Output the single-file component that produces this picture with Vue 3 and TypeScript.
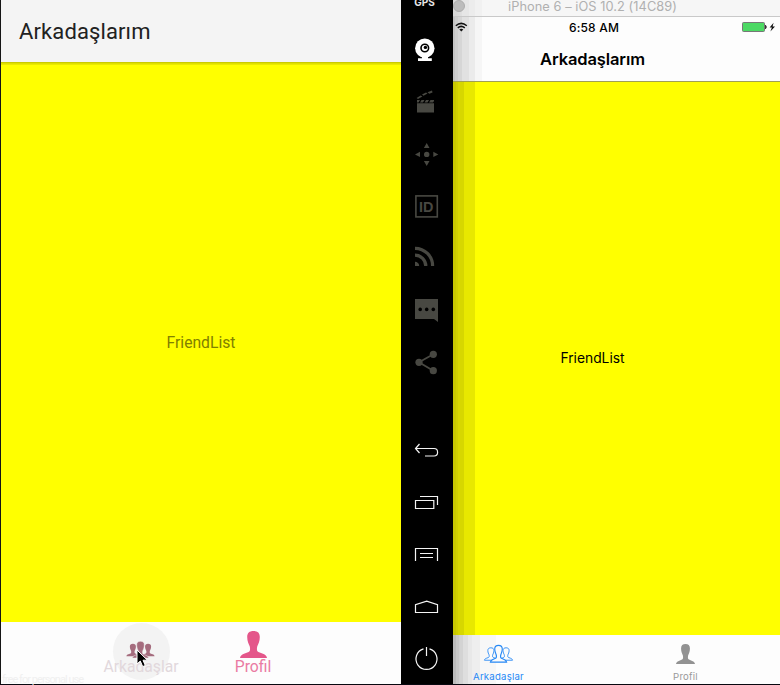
<script setup lang="ts">
const person =
  'M13.5 0C17.6 0 19.8 2 19.8 6C19.8 10.5 18.2 13 17.3 15.2C16.6 18 16.8 20.2 18.4 21L23 22.8C25.5 23.8 26.6 25 27 27H0C.4 25 1.5 23.8 4 22.8L8.6 21C10.2 20.2 10.4 18 9.7 15.2C8.8 13 7.2 10.5 7.2 6C7.2 2 9.4 0 13.5 0Z'
const sides: string[] = ['translate(-.6 2.8) scale(.48 .46)', 'translate(14.6 2.8) scale(.48 .46)']
const center = 'translate(5.4 .3) scale(.6 .62)'
</script>

<template>
  <main class="screen">
    <section class="android">
      <header class="android-header">Arkadaşlarım</header>
      <div class="android-body">FriendList</div>
      <nav class="android-tabs">
        <div class="a-tab pressed">
          <span class="ripple"></span>
          <svg class="a-group" viewBox="0 0 27 18">
            <path v-for="t in sides" :key="t" :d="person" :transform="t" />
            <path :d="person" :transform="center" class="front" />
          </svg>
          <span class="a-label">Arkadaşlar</span>
          <svg class="cursor" viewBox="0 0 13 19">
            <path d="M1 1V15L4.3 12L6.7 17.6L9.3 16.5L7 11.2H11.4Z" />
          </svg>
        </div>
        <div class="a-tab">
          <svg class="a-person" viewBox="0 0 27 27"><path :d="person" /></svg>
          <span class="a-label">Profil</span>
        </div>
        <span class="mark">free for personal use</span>
      </nav>
    </section>

    <aside class="toolbar">
      <div class="gps">GPS</div>
      <div class="tools">
        <svg viewBox="0 0 26 26">
          <circle cx="10.8" cy="11.2" r="9.7" fill="#fff" />
          <circle cx="10.8" cy="11" r="3.8" fill="#fff" stroke="#000" stroke-width="1.6" />
          <circle cx="11.4" cy="10.4" r="1.7" fill="#000" />
          <path d="M8 19h6v2.2h3.8V24H4v-2.8h4z" fill="#fff" />
        </svg>
        <svg viewBox="0 0 26 26">
          <path d="M3 14.2h17v9.3H3zM3 11h3l-1.5 2.5H3zM7.5 11h3L9 13.5H6zM12 11h3l-1.5 2.5h-3zM16.5 11H20v1l-1 1.5h-4zM2.6 9l4-2.6 1.8 1L4 9.9zM8 5.6l4-2.2 1.5 1-4 2.4zM13.5 3.2L18 1.6l.5 1.8-3.2 1.3z" fill="#484842" />
        </svg>
        <svg viewBox="0 0 26 26">
          <circle cx="12.7" cy="13.4" r="2.7" fill="#484842" />
          <path d="M12.7 2l2.8 5h-5.6zM12.7 25l2.8-5h-5.6zM1 13.4l5-2.7v5.4zM24.3 13.4l-5-2.7v5.4z" fill="#484842" />
        </svg>
        <svg viewBox="0 0 26 26">
          <rect x="1.9" y="2.9" width="21.4" height="21" fill="none" stroke="#484842" stroke-width="1.6" />
          <text x="5" y="18.9" textLength="14.4" lengthAdjust="spacingAndGlyphs" class="id">ID</text>
        </svg>
        <svg viewBox="0 0 26 26">
          <g fill="none" stroke="#484842" stroke-width="3.2">
            <path d="M1 3.3A17.6 17.6 0 0 1 18.6 21" />
            <path d="M1 10.2A10.8 10.8 0 0 1 11.8 21" />
          </g>
          <path d="M1 16.8A4.2 4.2 0 0 1 5.2 21H1z" fill="#484842" />
        </svg>
        <svg viewBox="0 0 26 26">
          <path d="M1 2h23v23l-4-3H1z" fill="#484842" />
          <g fill="#000"><circle cx="6.2" cy="12.4" r="1.8" /><circle cx="12.7" cy="12.4" r="1.8" /><circle cx="19.3" cy="12.4" r="1.8" /></g>
        </svg>
        <svg viewBox="0 0 26 26">
          <path d="M19.3 5.3L5 13.3L19.3 21.7" fill="none" stroke="#484842" stroke-width="1.8" />
          <g fill="#484842"><circle cx="19.3" cy="5.3" r="3.6" /><circle cx="5" cy="13.3" r="3.6" /><circle cx="19.3" cy="21.7" r="3.6" /></g>
        </svg>
      </div>
      <div class="tools line">
        <svg viewBox="0 0 26 26"><path d="M5.5 7L1.5 11.5L5.5 16M1.5 11.5H20C24.8 11.5 24.8 19 20 19H11" /></svg>
        <svg viewBox="0 0 26 26"><path d="M1.5 11.5h18.3v8H1.5zM6 7.5h17.5v8.5" /></svg>
        <svg viewBox="0 0 26 26"><path d="M1.5 20V7.5h22V20M6 12.5h13M6 16.5h13" /></svg>
        <svg viewBox="0 0 26 26"><path d="M1.5 19.5v-7.8L12.7 8.2l10.8 3.5v7.8z" /></svg>
        <svg viewBox="0 0 26 26"><path d="M9.5 3.9A10.5 10.5 0 1 0 15.5 3.9M12.5 2v9" /></svg>
      </div>
    </aside>

    <section class="ios">
      <div class="window-bar"><i class="dot"></i><span>iPhone 6 – iOS 10.2 (14C89)</span></div>
      <header class="ios-header">
        <div class="status">
          <svg class="wifi" viewBox="0 0 13 10">
            <g fill="none" stroke="#111" stroke-width="1.5"><path d="M.8 3.7Q6.2-1 11.8 3.7M2.8 5.9Q6.2 2.8 9.8 5.9" /></g>
            <path d="M4.3 7.6Q6.3 6 8.3 7.6L6.3 9.6z" fill="#111" />
          </svg>
          <span class="time">6:58 AM</span>
          <svg class="battery" viewBox="0 0 34 10">
            <rect x=".5" y=".5" width="22" height="9" rx="1" fill="#4cd964" stroke="#777" />
            <path d="M23.5 3.2q1.6 1.8 0 3.6z" fill="#333" stroke="#333" />
            <path d="M31.6.8L27.6 5.6h2.3L28.4 9.4 33 4.4h-2.4z" fill="#111" />
          </svg>
        </div>
        <h1>Arkadaşlarım</h1>
      </header>
      <div class="ios-body">FriendList</div>
      <nav class="ios-tabs">
        <div class="i-tab active">
          <svg class="i-group" viewBox="0 0 27 18">
            <path v-for="t in sides" :key="t" :d="person" :transform="t" />
            <path :d="person" :transform="center" />
          </svg>
          <span>Arkadaşlar</span>
        </div>
        <div class="i-tab">
          <svg class="i-person" viewBox="0 0 27 27" preserveAspectRatio="none"><path :d="person" /></svg>
          <span>Profil</span>
        </div>
      </nav>
    </section>
  </main>
</template>

<style>
body { background: #000; overflow: hidden; }
</style>

<style scoped>
.screen { display: grid; grid-template-columns: 401px 52px 327px; height: 684px; border-bottom: 1px solid #080810; }
svg { display: block; flex: none; }
.android { display: flex; flex-direction: column; border-left: 1px solid #151515; font-family: Roboto, sans-serif; min-width: 0; }
.android-header { height: 62px; box-sizing: border-box; padding-left: 18px; line-height: 63px; font-size: 22px; letter-spacing: .12px; color: #212121; background: #f4f4f4; }
.android-body { flex: 1; display: flex; align-items: center; justify-content: center; padding-top: 1px; background: linear-gradient(#cbcb00 0 1px, #dfdf00 1px 2px, #eaea00 2px 3px, #ff0 3px); color: #808000; font-size: 15.7px; letter-spacing: 0; }
.android-tabs { height: 62px; display: flex; padding-left: 84px; background: #fdfdfd; position: relative; }
.a-tab { width: 112px; display: flex; flex-direction: column; align-items: center; padding-top: 9px; box-sizing: border-box; position: relative; }
.a-tab.pressed { padding-top: 19px; }
.a-person { width: 27px; height: 27px; fill: #e4568a; }
.a-group { width: 27px; height: 18px; margin-left: -1px; fill: #a56c7e; position: relative; overflow: visible; }
.front { stroke: #f3f3f3; stroke-width: .8; }
.a-label { height: 18px; font-size: 15.7px; line-height: 18px; color: #ea7ba3; position: relative; }
.pressed .a-label { margin-top: -1px; color: #e2d8dc; }
.ripple { position: absolute; left: 28px; top: 1px; width: 57px; height: 57px; border-radius: 50%; background: #f3f3f3; }
.cursor { position: absolute; left: 51px; top: 27px; width: 13px; height: 19px; fill: #000; stroke: #fff; stroke-width: 1; }
.mark { position: absolute; left: 1px; bottom: -3px; font-size: 11px; line-height: 14px; color: #f0f0f0; white-space: nowrap; letter-spacing: -.95px; }
.toolbar { background: #000; display: flex; flex-direction: column; align-items: center; }
.gps { height: 24px; color: #e6e6e6; font: bold 10px/5px Inter, sans-serif; margin-left: -5px; }
.tools { display: flex; flex-direction: column; }
.tools svg { width: 26px; height: 26px; margin: 13px 0; }
.line { margin-top: 36px; fill: none; stroke: #f4f4f4; stroke-width: 1.2; }
.id { font: bold 15.5px "Liberation Sans", sans-serif; fill: #484842; }
.ios { display: flex; flex-direction: column; font-family: Inter, sans-serif; min-width: 0; }
.window-bar { height: 16px; border-bottom: 1px solid #c9c9c9; background: linear-gradient(90deg, #d8d8d8 0 3px, #e0e0e0 9px, #e6e6e6 9px 16px, #ececec 16px 22px, #f1f1f1 22px 29px, #f6f6f6 29px); display: flex; align-items: center; color: #b0b0b0; font-size: 12.8px; line-height: 14px; }
.window-bar span { margin-left: 43px; margin-top: -3px; letter-spacing: .06px; white-space: nowrap; }
.dot { width: 12px; height: 12px; box-sizing: border-box; border: 1px solid #adadad; border-radius: 50%; background: #bcbcbc; margin-top: -4px; }
.ios-header { height: 64px; border-bottom: 1px solid #a0a052; background: linear-gradient(90deg, #c4c4c4 0 2px, #cecece 2px 5px, #d6d6d6 5px 9px, #e1e1e1 9px 16px, #ebebeb 16px 22px, #f6f6f6 22px 29px, #fdfdfd 29px); }
.status { height: 20px; display: grid; grid-template-columns: 20px 1fr 38px; align-items: center; }
.wifi { width: 13px; height: 10px; margin-left: 2px; }
.time { font-size: 12px; font-weight: 500; text-align: center; padding-right: 27px; letter-spacing: .18px; color: #000; }
.battery { width: 34px; height: 10px; }
h1 { margin: 0; font-size: 16.5px; line-height: 44px; font-weight: 600; text-align: center; color: #000; letter-spacing: -.12px; padding-right: 48px; }
.ios-body { flex: 1; display: flex; justify-content: center; align-items: center; padding: 0 48px 2px 0; font-size: 13.8px; color: #000; background: linear-gradient(90deg, #c7c700 0 3px, #cfcf00 3px 5px, #d7d700 5px 11px, #e8e800 11px 22px, #ff0 22px); }
.ios-tabs { height: 49px; box-sizing: border-box; display: flex; background: linear-gradient(90deg, #bcbcbc 0 3px, #c9c9c9 3px 6px, #d3d3d3 6px 10px, #dedede 10px 15px, #e8e8e8 15px 19px, #eee 19px 27px, #f7f7f7 27px 43px, #fdfdfd 43px); }
.i-tab { width: 187px; display: flex; flex-direction: column; align-items: center; padding-top: 9px; box-sizing: border-box; color: #999; font-size: 9.6px; }
.i-tab.active { margin-left: -48px; padding-top: 10px; color: #2688f5; }
.i-tab span { line-height: 12px; letter-spacing: .22px; }
.i-group { width: 27px; height: 18px; margin-bottom: 8px; fill: #fbfbfb; stroke: #2688f5; stroke-width: 1.9; overflow: visible; }
.i-person { width: 19px; height: 20px; margin-bottom: 7px; fill: #929292; }
</style>
